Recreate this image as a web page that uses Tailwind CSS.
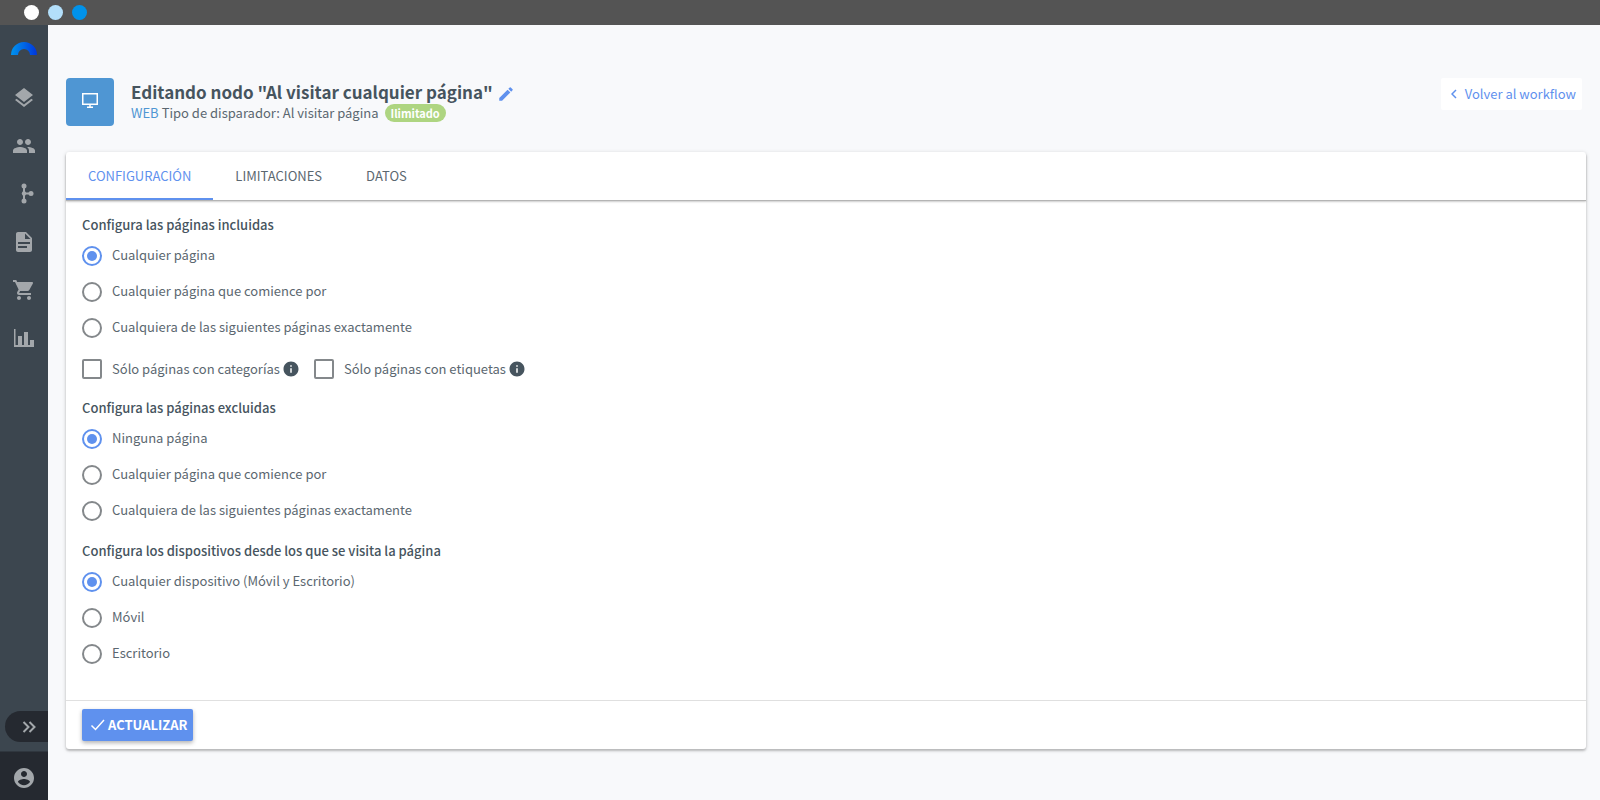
<!DOCTYPE html>
<html lang="es">

<head>
    <meta charset="UTF-8">
    <meta name="viewport" content="width=device-width, initial-scale=1.0">
    <script src="https://cdn.jsdelivr.net/npm/@tailwindcss/browser@4"></script>
    <title>Editando nodo</title>
</head>

<body class="flex min-h-screen flex-col bg-[#f8f9fb] font-['Noto_Sans_CJK_SC','Noto_Sans',sans-serif] text-[13px] leading-5 text-[#5b6770]">

    <!--Top Bar-->
    <div class="flex h-[25px] shrink-0 items-center gap-[9px] bg-[#545454] pl-6">
        <span class="size-[15px] rounded-full bg-white"></span>
        <span class="size-[15px] rounded-full bg-[#b3dffa]"></span>
        <span class="size-[15px] rounded-full bg-[#0092ea]"></span>
    </div>

    <div class="flex grow">

        <!--Sidebar-->
        <nav class="flex w-12 shrink-0 flex-col items-center bg-[#3c464f] text-[#a3a7ab]" aria-label="Principal">
            <a href="#" class="mt-4 mr-px" aria-label="Inicio">
                <svg class="h-[14px] w-[26px]" viewBox="0 0 26 14">
                    <defs>
                        <linearGradient id="arc" x1="0" x2="1" y1="0" y2="0">
                            <stop offset="0" stop-color="#0094ee" />
                            <stop offset=".5" stop-color="#0066e6" />
                            <stop offset="1" stop-color="#0036dc" />
                        </linearGradient>
                    </defs>
                    <path fill="url(#arc)" d="M0 14a13 13 0 0126 0h-7a6 6 0 00-12 0z" />
                </svg>
            </a>
            <div class="mt-[31px] flex flex-col gap-6">
                <a href="#" aria-label="Contenidos">
                    <svg class="size-6" viewBox="0 0 24 24" fill="currentColor">
                        <path d="M11.99 18.54l-7.37-5.73L3 14.07l9 7 9-7-1.63-1.27-7.38 5.74zM12 16l7.36-5.73L21 9l-9-7-9 7 1.63 1.27L12 16z" />
                    </svg>
                </a>
                <a href="#" aria-label="Contactos">
                    <svg class="size-6" viewBox="0 0 24 24" fill="currentColor">
                        <path d="M16 11c1.66 0 2.99-1.34 2.99-3S17.66 5 16 5c-1.66 0-3 1.34-3 3s1.34 3 3 3zm-8 0c1.66 0 2.99-1.34 2.99-3S9.66 5 8 5C6.34 5 5 6.34 5 8s1.34 3 3 3zm0 2c-2.33 0-7 1.17-7 3.5V19h14v-2.5c0-2.33-4.67-3.5-7-3.5zm8 0c-.29 0-.62.02-.97.05 1.16.84 1.97 1.97 1.97 3.45V19h6v-2.5c0-2.33-4.67-3.5-7-3.5z" />
                    </svg>
                </a>
                <a href="#" aria-label="Workflows">
                    <svg class="size-6" viewBox="0 0 24 24" fill="currentColor">
                        <path d="M12 4v16M12 11.500h8" stroke="currentColor" stroke-width="2" />
                        <circle cx="12" cy="4" r="2.500" />
                        <circle cx="12" cy="11.500" r="2.200" />
                        <circle cx="19" cy="11.500" r="2.500" />
                        <circle cx="12" cy="19" r="2.500" />
                    </svg>
                </a>
                <a href="#" aria-label="Documentos">
                    <svg class="size-6" viewBox="0 0 24 24" fill="currentColor">
                        <path d="M14 2H6c-1.100 0-2 .9-2 2v16c0 1.100.9 2 2 2h12c1.100 0 2-.9 2-2V8l-6-6zm1 16H6v-2h9v2zm3-4H6v-2h12v2zm-5-5V3.500L18.500 9H13z" />
                    </svg>
                </a>
                <a href="#" aria-label="Pedidos">
                    <svg class="size-6" viewBox="0 0 24 24" fill="currentColor">
                        <path d="M7 18c-1.100 0-1.990.9-1.990 2S5.900 22 7 22s2-.9 2-2-.9-2-2-2zM1 2v2h2l3.600 7.590-1.350 2.450c-.16.28-.25.61-.25.96 0 1.100.9 2 2 2h12v-2H7.420c-.14 0-.25-.11-.25-.25l.03-.12.9-1.630h7.450c.75 0 1.410-.41 1.750-1.030l3.580-6.490c.08-.14.12-.31.12-.48 0-.55-.45-1-1-1H5.210l-.94-2H1zm16 16c-1.100 0-1.990.9-1.990 2s.89 2 1.990 2 2-.9 2-2-.9-2-2-2z" />
                    </svg>
                </a>
                <a href="#" aria-label="Informes">
                    <svg class="size-6" viewBox="0 0 24 24" fill="currentColor">
                        <path d="M2 3h1.500v16H6v-9h4v9h2V6h4v13h2v-5h4v7H2z" />
                    </svg>
                </a>
            </div>
            <button type="button" class="mt-auto flex h-[31px] w-[43px] items-center self-end rounded-l-full bg-[#252930] pl-[17px]" aria-label="Expandir menú">
                <svg class="h-3 w-[14px]" viewBox="0 0 14 12" fill="none" stroke="currentColor" stroke-width="2">
                    <path d="M1.500 1l5 5-5 5M7.500 1l5 5-5 5" />
                </svg>
            </button>
            <a href="#" class="mt-[9px] flex h-[49px] w-full items-center justify-center border-t border-[#30373f] bg-[#252930] pt-[3px]" aria-label="Mi cuenta">
                <svg class="size-6" viewBox="0 0 24 24" fill="currentColor">
                    <path d="M12 2C6.480 2 2 6.480 2 12s4.480 10 10 10 10-4.480 10-10S17.520 2 12 2zm0 3c1.660 0 3 1.340 3 3s-1.340 3-3 3-3-1.340-3-3 1.340-3 3-3zm0 14.200c-2.500 0-4.710-1.280-6-3.220.03-1.990 4-3.080 6-3.080 1.990 0 5.970 1.090 6 3.080-1.290 1.940-3.500 3.220-6 3.220z" />
                </svg>
            </a>
        </nav>

        <main class="grow pt-[53px] pr-[14px] pl-[18px]">

            <!--Header-->
            <header class="flex items-start">
                <div class="flex size-12 items-center justify-center rounded bg-[#4f96d3] pb-1">
                    <svg class="size-[18px]" viewBox="0 0 18 18" fill="none" stroke="white" stroke-width="1.500">
                        <path d="M1.750 2.750h14.500v10.500H1.750zM9 13v3M6 16.250h6" />
                    </svg>
                </div>
                <div class="ml-[17px]">
                    <h1 class="flex items-center text-[17px] leading-7 font-bold text-[#46545e]">
                        Editando nodo "Al visitar cualquier página"
                        <button type="button" class="ml-1 pt-[3px] text-[#5f91ee]" aria-label="Editar nombre">
                            <svg class="size-[18px]" viewBox="0 0 24 24" fill="currentColor">
                                <path d="M3 17.250V21h3.750L17.810 9.940l-3.750-3.750L3 17.250zM20.710 7.040a.996.996 0 000-1.410l-2.340-2.340a.996.996 0 00-1.410 0l-1.830 1.830 3.750 3.750 1.830-1.830z" />
                            </svg>
                        </button>
                    </h1>
                    <p class="-mt-[3px] flex items-center">
                        <span class="mr-[3px] text-[#4f96d3]">WEB</span>
                        Tipo de disparador: Al visitar página
                        <span class="ml-[6px] rounded-full bg-[#aed581] px-[6px] text-[11px] leading-[18px] font-bold text-white">Ilimitado</span>
                    </p>
                </div>
                <a href="#" class="mr-1 ml-auto flex h-8 items-center rounded-xs bg-white pr-[6px] pl-[10px] text-[#5f91ee]">
                    <svg class="mr-2 h-[10px] w-[6px]" viewBox="0 0 6 10" fill="none" stroke="currentColor" stroke-width="1.500">
                        <path d="M5 1L1 5l4 4" />
                    </svg>
                    Volver al workflow
                </a>
            </header>

            <form class="mt-[26px] rounded-[3px] bg-white shadow-[0_2px_2px_rgba(0,0,0,0.16),0_1px_4px_rgba(0,0,0,0.18)]">

                <!--Tabs-->
                <div class="flex h-12 rounded-t-[3px] shadow-[0_1px_0_#b4b4b4,0_2px_2px_rgba(0,0,0,0.2)]" role="tablist">
                    <button type="button" role="tab" aria-selected="true" class="border-b-2 border-[#5f91ee] px-[22px] pt-[2px] text-[#5f91ee]">CONFIGURACIÓN</button>
                    <button type="button" role="tab" aria-selected="false" class="border-b-2 border-transparent px-[22px] pt-[2px]">LIMITACIONES</button>
                    <button type="button" role="tab" aria-selected="false" class="border-b-2 border-transparent px-[22px] pt-[2px]">DATOS</button>
                </div>

                <div class="px-4 pt-[15px] pb-7">

                    <!--Included pages-->
                    <fieldset>
                        <legend class="mb-[3px] font-medium text-[#46545e]">Configura las páginas incluidas</legend>
                        <label class="flex h-9 items-center gap-[10px]">
                            <input type="radio" name="incluidas" checked class="grid size-5 appearance-none place-content-center rounded-full border-2 border-[#84888b] before:size-[10px] before:rounded-full checked:border-[#5f91ee] checked:before:bg-[#5f91ee]">
                            <span class="pb-[3px]">Cualquier página</span>
                        </label>
                        <label class="flex h-9 items-center gap-[10px]">
                            <input type="radio" name="incluidas" class="grid size-5 appearance-none place-content-center rounded-full border-2 border-[#84888b] before:size-[10px] before:rounded-full checked:border-[#5f91ee] checked:before:bg-[#5f91ee]">
                            <span class="pb-[3px]">Cualquier página que comience por</span>
                        </label>
                        <label class="flex h-9 items-center gap-[10px]">
                            <input type="radio" name="incluidas" class="grid size-5 appearance-none place-content-center rounded-full border-2 border-[#84888b] before:size-[10px] before:rounded-full checked:border-[#5f91ee] checked:before:bg-[#5f91ee]">
                            <span class="pb-[3px]">Cualquiera de las siguientes páginas exactamente</span>
                        </label>
                        <div class="mt-[13px] flex items-center gap-[14px]">
                            <label class="flex items-center">
                                <input type="checkbox" class="mr-[10px] size-5 appearance-none rounded-xs border-2 border-[#84888b] checked:bg-[#5f91ee]">
                                <span>Sólo páginas con categorías</span>
                                <svg class="ml-[2px] size-[18px]" viewBox="0 0 24 24" fill="#46545e">
                                    <path d="M12 2C6.480 2 2 6.480 2 12s4.480 10 10 10 10-4.480 10-10S17.520 2 12 2zm1 15h-2v-6h2v6zm0-8h-2V7h2v2z" />
                                </svg>
                            </label>
                            <label class="flex items-center">
                                <input type="checkbox" class="mr-[10px] size-5 appearance-none rounded-xs border-2 border-[#84888b] checked:bg-[#5f91ee]">
                                <span>Sólo páginas con etiquetas</span>
                                <svg class="ml-[2px] size-[18px]" viewBox="0 0 24 24" fill="#46545e">
                                    <path d="M12 2C6.480 2 2 6.480 2 12s4.480 10 10 10 10-4.480 10-10S17.520 2 12 2zm1 15h-2v-6h2v6zm0-8h-2V7h2v2z" />
                                </svg>
                            </label>
                        </div>
                    </fieldset>

                    <!--Excluded pages-->
                    <fieldset class="mt-[19px]">
                        <legend class="mb-[3px] font-medium text-[#46545e]">Configura las páginas excluidas</legend>
                        <label class="flex h-9 items-center gap-[10px]">
                            <input type="radio" name="excluidas" checked class="grid size-5 appearance-none place-content-center rounded-full border-2 border-[#84888b] before:size-[10px] before:rounded-full checked:border-[#5f91ee] checked:before:bg-[#5f91ee]">
                            <span class="pb-[3px]">Ninguna página</span>
                        </label>
                        <label class="flex h-9 items-center gap-[10px]">
                            <input type="radio" name="excluidas" class="grid size-5 appearance-none place-content-center rounded-full border-2 border-[#84888b] before:size-[10px] before:rounded-full checked:border-[#5f91ee] checked:before:bg-[#5f91ee]">
                            <span class="pb-[3px]">Cualquier página que comience por</span>
                        </label>
                        <label class="flex h-9 items-center gap-[10px]">
                            <input type="radio" name="excluidas" class="grid size-5 appearance-none place-content-center rounded-full border-2 border-[#84888b] before:size-[10px] before:rounded-full checked:border-[#5f91ee] checked:before:bg-[#5f91ee]">
                            <span class="pb-[3px]">Cualquiera de las siguientes páginas exactamente</span>
                        </label>
                    </fieldset>

                    <!--Devices-->
                    <fieldset class="mt-3">
                        <legend class="mb-[3px] font-medium text-[#46545e]">Configura los dispositivos desde los que se visita la página</legend>
                        <label class="flex h-9 items-center gap-[10px]">
                            <input type="radio" name="dispositivos" checked class="grid size-5 appearance-none place-content-center rounded-full border-2 border-[#84888b] before:size-[10px] before:rounded-full checked:border-[#5f91ee] checked:before:bg-[#5f91ee]">
                            <span class="pb-[3px]">Cualquier dispositivo (Móvil y Escritorio)</span>
                        </label>
                        <label class="flex h-9 items-center gap-[10px]">
                            <input type="radio" name="dispositivos" class="grid size-5 appearance-none place-content-center rounded-full border-2 border-[#84888b] before:size-[10px] before:rounded-full checked:border-[#5f91ee] checked:before:bg-[#5f91ee]">
                            <span class="pb-[3px]">Móvil</span>
                        </label>
                        <label class="flex h-9 items-center gap-[10px]">
                            <input type="radio" name="dispositivos" class="grid size-5 appearance-none place-content-center rounded-full border-2 border-[#84888b] before:size-[10px] before:rounded-full checked:border-[#5f91ee] checked:before:bg-[#5f91ee]">
                            <span class="pb-[3px]">Escritorio</span>
                        </label>
                    </fieldset>
                </div>

                <!--Actions-->
                <div class="border-t border-[#e0e0e0] px-4 py-2">
                    <button type="submit" class="flex h-8 items-center rounded-xs bg-[#5f91ee] pr-[6px] pl-2 font-bold text-white shadow-[0_2px_4px_rgba(0,0,0,0.3)]">
                        <svg class="mr-[3px] h-[14px] w-[15px]" viewBox="0 0 15 14" fill="none" stroke="currentColor" stroke-width="1.500">
                            <path d="M1.500 7.500l4 4L14 2" />
                        </svg>
                        ACTUALIZAR
                    </button>
                </div>
            </form>
        </main>
    </div>

</body>

</html>
